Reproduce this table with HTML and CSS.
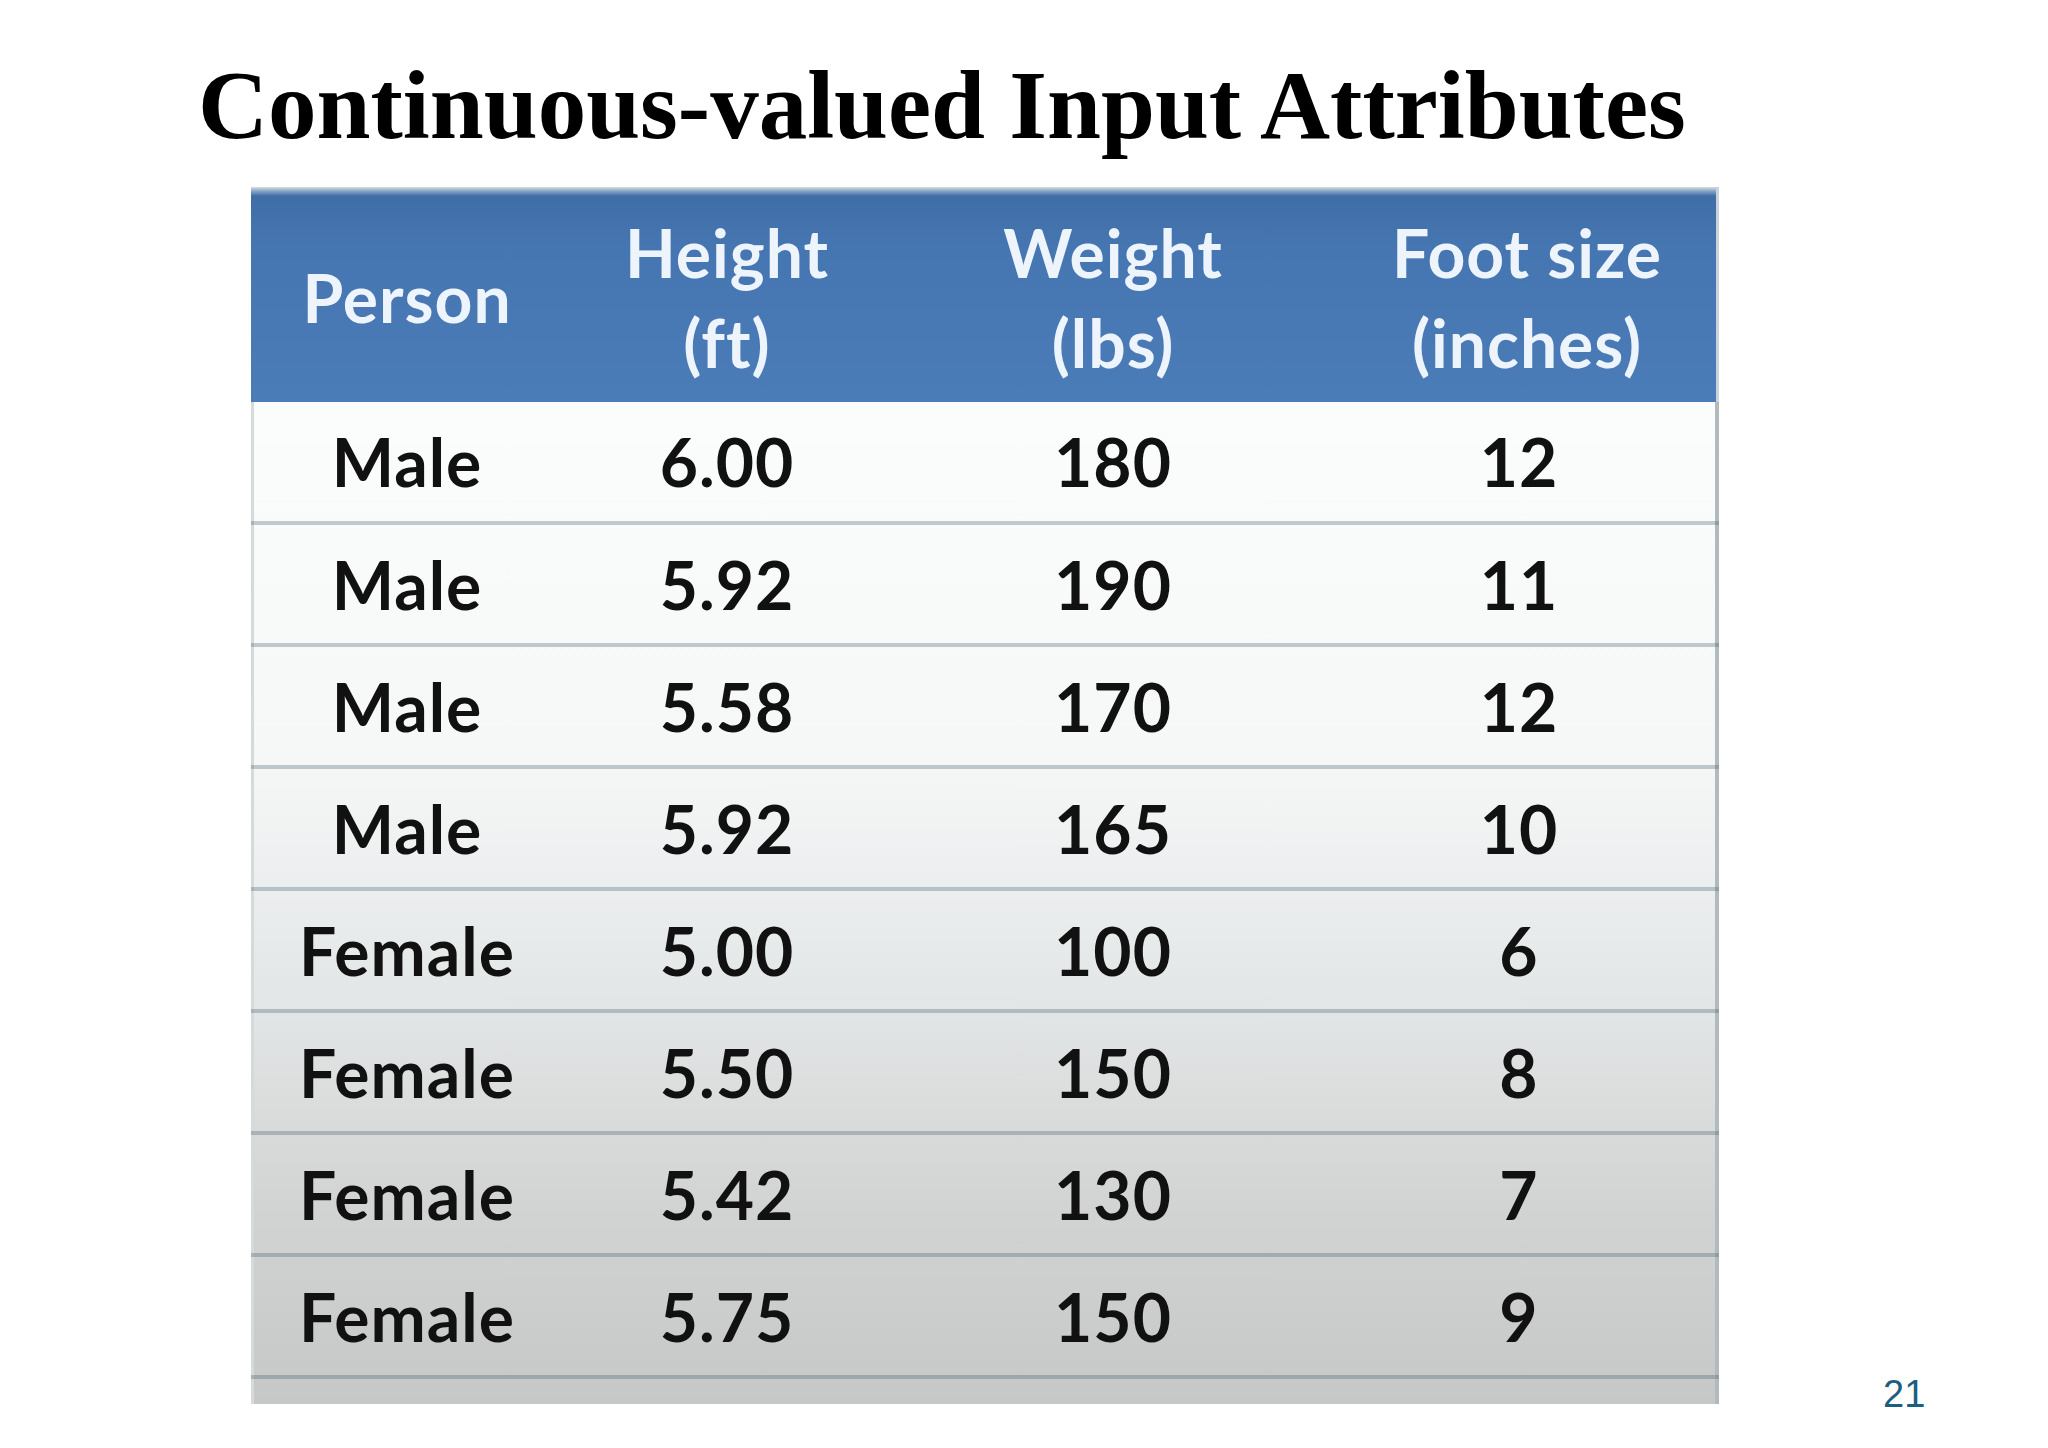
FILE: index.html
```html
<!DOCTYPE html>
<html lang="en">
<head>
<meta charset="utf-8">
<title>Continuous-valued Input Attributes</title>
<link rel="stylesheet" href="styles.css">
</head>
<body>
<div class="slide">
  <h1 class="title">Continuous-valued Input Attributes</h1>
  <div class="content">
    <div class="table">
      <div class="row head">
        <div class="cell">Person</div>
        <div class="cell">Height<br>(ft)</div>
        <div class="cell">Weight<br>(lbs)</div>
        <div class="cell">Foot size<br>(inches)</div>
      </div>
      <div class="body">
        <div class="row"><div class="cell">Male</div><div class="cell">6.00</div><div class="cell">180</div><div class="cell">12</div></div>
        <div class="row"><div class="cell">Male</div><div class="cell">5.92</div><div class="cell">190</div><div class="cell">11</div></div>
        <div class="row"><div class="cell">Male</div><div class="cell">5.58</div><div class="cell">170</div><div class="cell">12</div></div>
        <div class="row"><div class="cell">Male</div><div class="cell">5.92</div><div class="cell">165</div><div class="cell">10</div></div>
        <div class="row"><div class="cell">Female</div><div class="cell">5.00</div><div class="cell">100</div><div class="cell">6</div></div>
        <div class="row"><div class="cell">Female</div><div class="cell">5.50</div><div class="cell">150</div><div class="cell">8</div></div>
        <div class="row"><div class="cell">Female</div><div class="cell">5.42</div><div class="cell">130</div><div class="cell">7</div></div>
        <div class="row"><div class="cell">Female</div><div class="cell">5.75</div><div class="cell">150</div><div class="cell">9</div></div>
        <div class="tail"></div>
      </div>
    </div>
    <div class="page-num">21</div>
  </div>
</div>
</body>
</html>
```

FILE: styles.css
```css
html, body {
  margin: 0;
  padding: 0;
  background: #ffffff;
}

.slide {
  width: 2048px;
  height: 1448px;
  overflow: hidden;
  background: #ffffff;
}

.title {
  margin: 52px 0 0 198px;
  font-family: "Liberation Serif", "Times New Roman", serif;
  font-weight: bold;
  font-size: 97px;
  line-height: 107px;
  color: #000000;
  white-space: nowrap;
}

.content {
  display: flex;
  align-items: flex-end;
  margin: 28px 0 0 251px;
}

.table {
  width: 1468px;
  display: flex;
  flex-direction: column;
  font-family: Lato, "Open Sans", sans-serif;
  font-weight: bold;
}

.row {
  display: grid;
  grid-template-columns: 312px 328px 444px 384px;
  align-items: center;
}

.cell {
  text-align: center;
}

.head {
  height: 215px;
  background: linear-gradient(to bottom, #d9dee3 0px, #8aa6c4 4px, #3f6ea6 9px, #4676b1 60px, #4a7cb8 100%);
  color: #eef4fb;
  font-size: 66px;
  letter-spacing: 1px;
  line-height: 90px;
  box-sizing: border-box;
  padding-top: 6px;
  border-right: 3px solid #c9d3dc;
}

.body {
  display: flex;
  flex-direction: column;
  background: linear-gradient(to bottom, #fbfdfc 0%, #f6f8f8 35%, #e3e6e6 60%, #d2d4d3 80%, #c6c8c7 100%);
  border-left: 3px solid #d6dada;
  border-right: 4px solid #b2babe;
}

.body .row {
  height: 122px;
  box-sizing: border-box;
  border-bottom: 4px solid rgba(70, 95, 112, 0.32);
  color: #111111;
  font-size: 66px;
  letter-spacing: 1px;
  margin-left: -3px;
  margin-right: -4px;
}

.body .row:first-child {
  height: 123px;
}

.body .cell:last-child {
  padding-right: 16px;
}

.tail {
  height: 25px;
}

.page-num {
  margin: 0 0 -9px 164px;
  font-family: "Liberation Sans", Arial, sans-serif;
  font-size: 38px;
  line-height: 38px;
  color: #1b5e7e;
}
```
